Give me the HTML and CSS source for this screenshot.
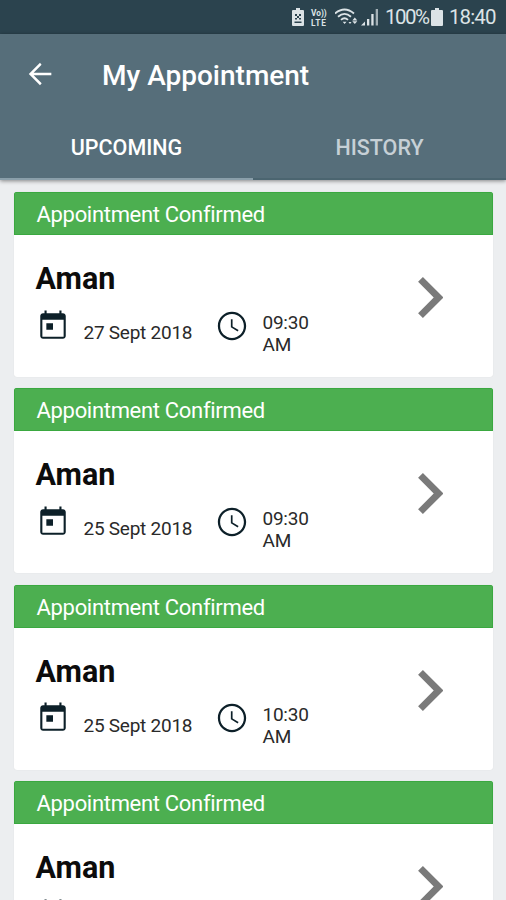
FILE: index.html
```html
<!DOCTYPE html>
<html lang="en">
<head>
    <meta charset="UTF-8">
    <meta name="viewport" content="width=device-width, initial-scale=1.0">
    <title>My Appointment</title>
    <link rel="stylesheet" href="styles.css">
</head>
<body>
    <!-- Shared icons -->
    <svg class="sprite" aria-hidden="true">
        <symbol id="icon-calendar" viewBox="0 0 24 24">
            <path d="M19 3h-1V1h-1.5v2h-9V1H6v2H5c-1.11 0-1.99.9-1.99 2L3 19c0 1.1.89 2 2 2h14c1.1 0 2-.9 2-2V5c0-1.1-.9-2-2-2zm.5 16.5h-15V7.5h15v12zM7.3 10h4.7v4.7H7.3z"/>
        </symbol>
        <symbol id="icon-clock" viewBox="0 0 24 24">
            <path d="M11.99 2C6.47 2 2 6.48 2 12s4.47 10 9.99 10C17.52 22 22 17.52 22 12S17.52 2 11.99 2zM12 20.4c-4.64 0-8.4-3.76-8.4-8.4s3.76-8.4 8.4-8.4 8.4 3.76 8.4 8.4-3.76 8.4-8.4 8.4zm.4-13.2H11.2v5.7l4.8 2.95.65-1.05-4.25-2.5z"/>
        </symbol>
        <symbol id="icon-chevron" viewBox="8.59 6 7.41 12">
            <path d="M10 6L8.59 7.41 13.17 12l-4.58 4.59L10 18l6-6z"/>
        </symbol>
    </svg>

    <!-- Status Bar -->
    <div class="status-bar">
        <svg class="status-saver" viewBox="0 0 12 18">
            <path fill="#dce3e6" d="M4 0h4v2h3a1 1 0 0 1 1 1v14a1 1 0 0 1-1 1H1a1 1 0 0 1-1-1V3a1 1 0 0 1 1-1h3z"/>
            <path fill="#2b434e" d="M3 6h2v2H3zM7 6h2v2H7zM5 8h2v2H5zM3 10h2v1.5H3zM7 10h2v1.5H7zM2.5 13.5h7V15h-7z"/>
        </svg>
        <div class="volte"><span>Vo))</span><span class="lte">LTE</span></div>
        <svg class="status-wifi" viewBox="0 0 23 18">
            <g fill="none" stroke="#dce3e6" stroke-width="1.8">
                <path d="M0 5.5Q9.5 -2.5 19 5.5"/>
                <path d="M3 8.7Q9.5 3 16 8.7"/>
                <path d="M6 11.9Q9.5 8.5 13 11.9"/>
            </g>
            <path fill="#dce3e6" d="M7.7 13.8h3.8L9.6 16zM13.5 14h3L15 16zM17.3 12.5l2.5-3 2.5 3zM17.3 13.3h5l-2.5 2.7z"/>
        </svg>
        <svg class="status-signal" viewBox="0 0 18 18">
            <path fill="#dce3e6" d="M0 17.5l4-4v4zM6 11h2.3v6.5H6zM10.3 6h2.3v11.5h-2.3z"/>
            <path fill="#a3b0b6" d="M14.7 1H17v16.5h-2.3z"/>
        </svg>
        <span class="battery-level">100%</span>
        <svg class="status-battery" viewBox="0 0 12 18">
            <path fill="#dce3e6" d="M4 0h4v2h3a1 1 0 0 1 1 1v14a1 1 0 0 1-1 1H1a1 1 0 0 1-1-1V3a1 1 0 0 1 1-1h3z"/>
        </svg>
        <span class="clock">18:40</span>
    </div>

    <!-- App Bar -->
    <header class="app-bar">
        <div class="toolbar">
            <svg class="back" viewBox="0 0 24 24">
                <path d="M20 11.05H7.5l5.6-5.6L12 4.1 4.1 12l7.9 7.9 1.2-1.3-5.7-5.65H20z"/>
            </svg>
            <h1 class="title">My Appointment</h1>
        </div>
        <nav class="tabs">
            <a class="tab active">UPCOMING</a>
            <a class="tab">HISTORY</a>
        </nav>
    </header>

    <!-- Appointments -->
    <main class="list">
        <div class="card">
            <div class="card-status">Appointment Confirmed</div>
            <div class="card-body">
                <div class="card-info">
                    <h2 class="name">Aman</h2>
                    <div class="details">
                        <svg class="icon"><use href="#icon-calendar"/></svg>
                        <span class="date">27 Sept 2018</span>
                        <svg class="icon"><use href="#icon-clock"/></svg>
                        <span class="time">09:30 AM</span>
                    </div>
                </div>
                <svg class="chevron"><use href="#icon-chevron"/></svg>
            </div>
        </div>
        <div class="card">
            <div class="card-status">Appointment Confirmed</div>
            <div class="card-body">
                <div class="card-info">
                    <h2 class="name">Aman</h2>
                    <div class="details">
                        <svg class="icon"><use href="#icon-calendar"/></svg>
                        <span class="date">25 Sept 2018</span>
                        <svg class="icon"><use href="#icon-clock"/></svg>
                        <span class="time">09:30 AM</span>
                    </div>
                </div>
                <svg class="chevron"><use href="#icon-chevron"/></svg>
            </div>
        </div>
        <div class="card">
            <div class="card-status">Appointment Confirmed</div>
            <div class="card-body">
                <div class="card-info">
                    <h2 class="name">Aman</h2>
                    <div class="details">
                        <svg class="icon"><use href="#icon-calendar"/></svg>
                        <span class="date">25 Sept 2018</span>
                        <svg class="icon"><use href="#icon-clock"/></svg>
                        <span class="time">10:30 AM</span>
                    </div>
                </div>
                <svg class="chevron"><use href="#icon-chevron"/></svg>
            </div>
        </div>
        <div class="card">
            <div class="card-status">Appointment Confirmed</div>
            <div class="card-body">
                <div class="card-info">
                    <h2 class="name">Aman</h2>
                    <div class="details">
                        <svg class="icon"><use href="#icon-calendar"/></svg>
                    </div>
                </div>
                <svg class="chevron"><use href="#icon-chevron"/></svg>
            </div>
        </div>
    </main>
</body>
</html>
```
FILE: styles.css
```css
:root {
    --bar: #566e7a;
    --bar-dark: #2b434e;
    --green: #4caf50;
    --page: #eceef0;
    --ink: #0d2029;
    --status: #dce3e6;
}

* {
    margin: 0;
    padding: 0;
    box-sizing: border-box;
}

body {
    height: 900px;
    display: flex;
    flex-direction: column;
    overflow: hidden;
    background: var(--page);
    font-family: Roboto, sans-serif;
}

svg {
    display: block;
    flex: none;
}

.sprite {
    display: none;
}

/* Status bar */
.status-bar {
    flex: none;
    height: 34px;
    padding-right: 11px;
    display: flex;
    justify-content: flex-end;
    align-items: center;
    background: var(--bar-dark);
    color: var(--status);
    font-size: 20.5px;
    line-height: 36px;
}

.status-saver,
.status-battery {
    width: 12px;
    height: 18px;
}

.volte {
    width: 18px;
    margin: 1px 6px 0 7px;
    display: flex;
    flex-direction: column;
    font-size: 8.3px;
    font-weight: 700;
    line-height: 10px;
}

.lte {
    letter-spacing: 0.8px;
}

.status-wifi {
    width: 23px;
    height: 18px;
}

.status-signal {
    width: 18px;
    height: 18px;
    margin: 0 6px 0 3px;
}

.battery-level {
    width: 44px;
    letter-spacing: -1.5px;
}

.status-battery {
    margin: 0 6px 0 2px;
}

.clock {
    width: 46px;
    letter-spacing: -0.9px;
}

/* App bar */
.app-bar {
    flex: none;
    height: 146px;
    display: flex;
    flex-direction: column;
    background: var(--bar);
    box-shadow: 0 1px 4px rgba(0, 0, 0, 0.45);
    color: #fff;
}

.toolbar {
    height: 80px;
    padding-left: 23px;
    display: flex;
    align-items: center;
}

.back {
    width: 34px;
    height: 34px;
    fill: #fff;
}

.title {
    margin-left: 45px;
    padding-top: 3px;
    font-size: 28px;
    font-weight: 500;
    line-height: 34px;
}

.tabs {
    flex: 1;
    display: flex;
}

.tab {
    flex: 1;
    height: 66px;
    padding-top: 3px;
    border-bottom: 2px solid #4b6570;
    color: #c6d0d6;
    font-size: 21.5px;
    font-weight: 500;
    line-height: 62px;
    text-align: center;
}

.tab.active {
    border-bottom-color: #8a9faa;
    color: #fff;
}

/* Cards */
.list {
    flex: 1;
    min-height: 0;
    padding: 12px 13px 0 14px;
    display: flex;
    flex-direction: column;
    gap: 11.4px;
    overflow: hidden;
}

.card {
    flex: none;
    height: 185px;
    background: #fff;
    border-radius: 3px;
    box-shadow: 0 0 1px rgba(0, 0, 0, 0.12);
    overflow: hidden;
}

.card-status {
    height: 43px;
    padding-left: 21.5px;
    background: var(--green);
    border: 1px solid #3aa840;
    color: #fff;
    font-size: 22px;
    letter-spacing: -0.31px;
    line-height: 43px;
}

.card-body {
    height: 142px;
    padding: 26px 50px 0 21.5px;
    display: flex;
    justify-content: space-between;
}

.name {
    color: #0c0c0c;
    font-size: 30.5px;
    font-weight: 700;
    line-height: 35px;
}

.details {
    margin-top: 12.6px;
    display: flex;
    align-items: flex-start;
}

.icon {
    width: 34px;
    height: 34px;
    fill: var(--ink);
}

.date {
    width: 108px;
    margin: 13.4px 23px 0 14px;
    color: #2a2a2a;
    font-size: 19px;
    letter-spacing: -0.25px;
    line-height: 22px;
    white-space: nowrap;
}

.time {
    width: 60px;
    margin: 3px 0 0 14px;
    color: #2a2a2a;
    font-size: 19px;
    letter-spacing: -0.25px;
    line-height: 22px;
}

.chevron {
    width: 25.5px;
    height: 41px;
    margin-top: 16px;
    fill: #7a7a7a;
}
```
